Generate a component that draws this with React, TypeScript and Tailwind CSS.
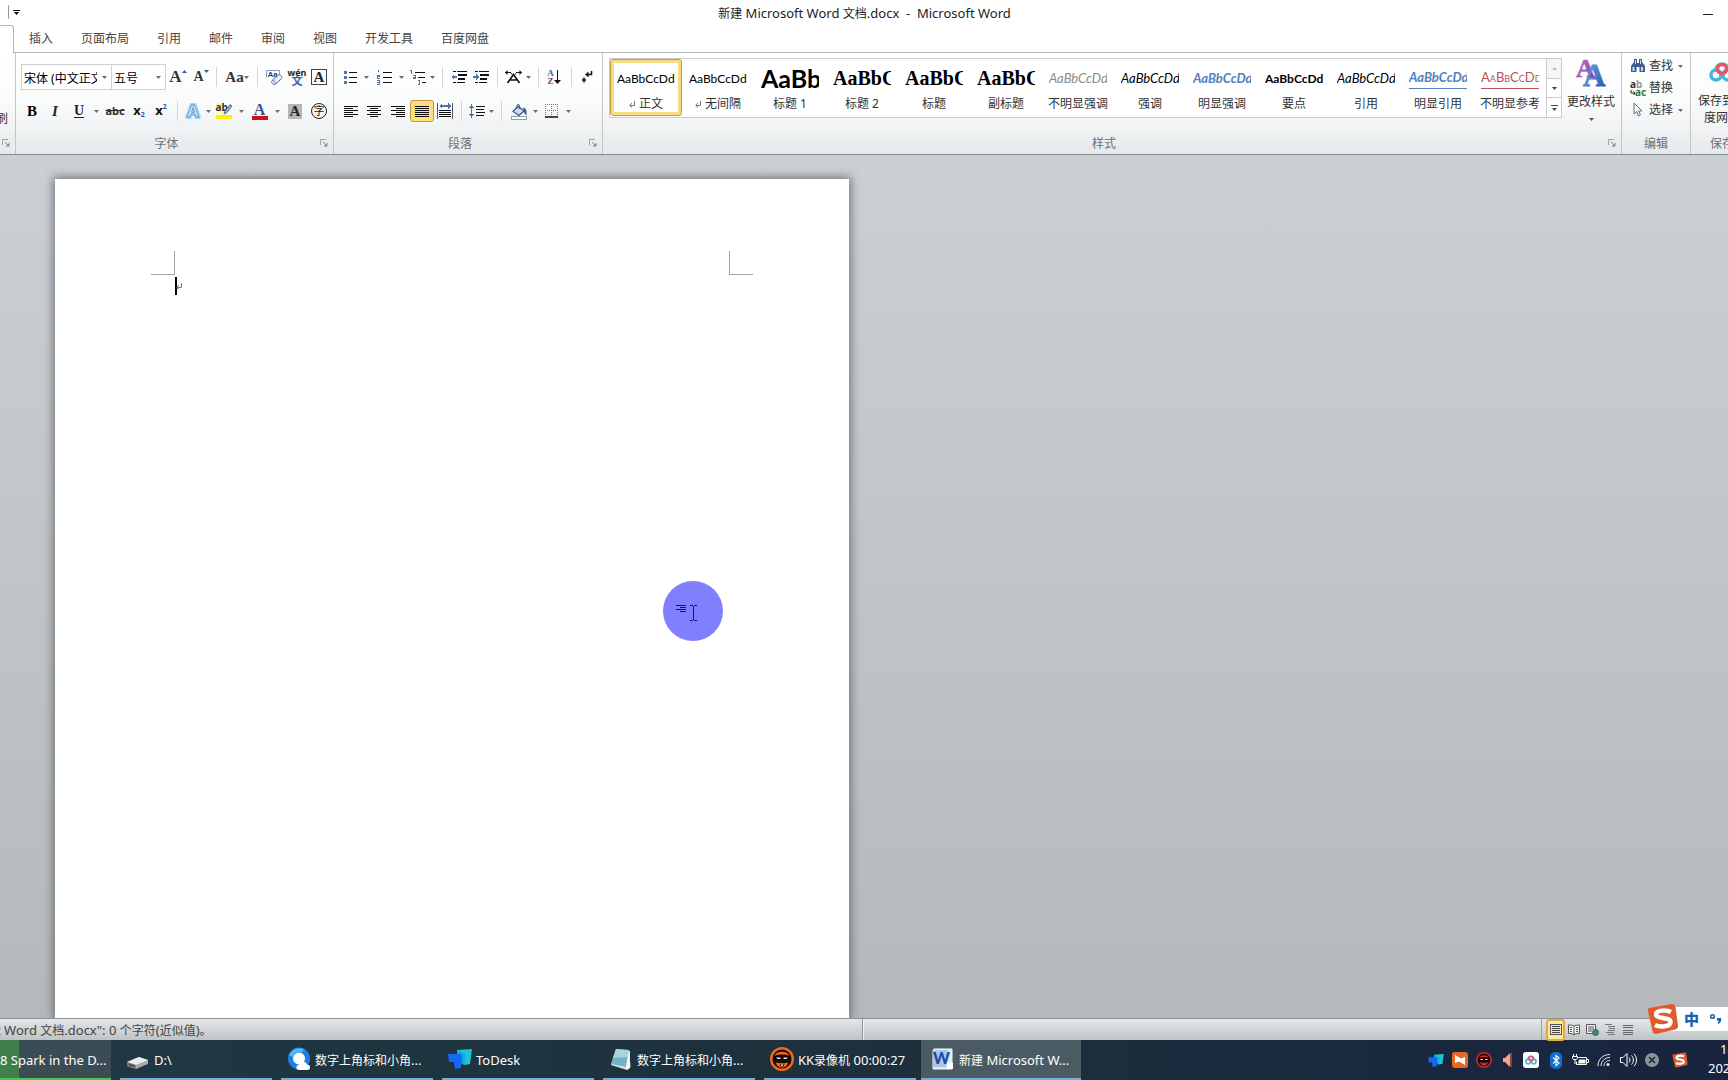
import React from "react";

const UI_FONT = "font-['Noto_Sans','Noto_Sans_CJK_SC',sans-serif]";

/* Latin runs are set one pixel larger than the Chinese characters beside them. */
function Mixed({ text }: { text: string }) {
  const runs = text.match(/[\x20-\x7e]+|[^\x20-\x7e]+/g) ?? [];
  return (
    <>
      {runs.map((run, i) => (
        <span key={i} className={/^[\x20-\x7e]/.test(run) ? "text-[13px]" : "text-xs"}>
          {run}
        </span>
      ))}
    </>
  );
}

function Tool({ w, label, className = "", children }: { w: string; label: string; className?: string; children: React.ReactNode }) {
  return (
    <button type="button" aria-label={label} title={label} className={`flex h-[22px] shrink-0 items-center justify-center ${w} ${className}`}>
      {children}
    </button>
  );
}

function Tri({ className = "text-[#6b6f74]" }: { className?: string }) {
  return (
    <svg width="5" height="3" viewBox="0 0 5 3" className={className} aria-hidden="true">
      <path d="M0 0h5L2.5 3z" fill="currentColor" />
    </svg>
  );
}

function Caret({ w, label }: { w: string; label: string }) {
  return (
    <Tool w={w} label={label}>
      <Tri />
    </Tool>
  );
}

function Sep({ w }: { w: string }) {
  return (
    <span className={`flex h-5 shrink-0 justify-center ${w}`}>
      <span className="w-px bg-[#d3d6d9]" />
    </span>
  );
}

/* Horizontal strokes given as [x, y, width]. */
function Lines({ rows, w = 16, h = 16, color = "#111", children }: { rows: number[][]; w?: number; h?: number; color?: string; children?: React.ReactNode }) {
  return (
    <svg width={w} height={h} viewBox={`0 0 ${w} ${h}`} shapeRendering="crispEdges" aria-hidden="true">
      {rows.map(([x, y, len], i) => (
        <rect key={i} x={x} y={y} width={len} height="1" fill={color} />
      ))}
      {children}
    </svg>
  );
}

function Launcher({ label }: { label: string }) {
  return (
    <button type="button" aria-label={label} className="absolute right-[5px] bottom-[7px]">
      <svg width="8" height="8" viewBox="0 0 8 8" fill="none" aria-hidden="true">
        <path d="M.5 6V.5H6" stroke="#9aa0a6" />
        <path d="M3 3l3 3" stroke="#7b8187" />
        <path d="M7.500 3.500v4h-4z" fill="#8a9096" />
      </svg>
    </button>
  );
}

function Group({ name, launcher = true, className = "", children }: { name: string; launcher?: boolean; className?: string; children: React.ReactNode }) {
  return (
    <section aria-label={name} className={`relative flex flex-col border-r border-[#c3c7ca] ${className}`}>
      <div className="flex-1">{children}</div>
      <h2 className={`h-[22px] text-center text-xs leading-6 whitespace-nowrap text-[#6a7178] ${launcher ? "pr-4" : ""}`}>{name}</h2>
      {launcher && <Launcher label={`${name}设置`} />}
    </section>
  );
}

function Picker({ label, value, w }: { label: string; value: string; w: string }) {
  return (
    <label className={`relative block h-[26px] border border-[#cfd2d5] bg-white ${w}`}>
      <select aria-label={label} className="h-full w-full appearance-none bg-transparent pr-3.5 pl-0.5 text-xs text-black outline-none">
        <option>{value}</option>
      </select>
      <span className="pointer-events-none absolute top-[11px] right-1">
        <Tri />
      </span>
    </label>
  );
}

const SERIF = "font-['Liberation_Serif',serif]";

function FontGroup() {
  return (
    <Group name="字体" className="w-[318px]">
      <div className="mt-[11px] flex h-[26px] items-center pl-[5px]">
        <Picker label="字体" value="宋体 (中文正文)" w="w-[91px]" />
        <Picker label="字号" value="五号" w="w-[55px] -ml-px" />
        <Tool w="w-6" label="增大字体" className={`${SERIF} text-[17px] font-bold text-[#333]`}>
          A
          <svg width="5" height="3" viewBox="0 0 5 3" className="-mt-3" aria-hidden="true"><path d="M0 3h5L2.500 0z" fill="#3b5b85" /></svg>
        </Tool>
        <Tool w="w-[22px]" label="缩小字体" className={`${SERIF} text-sm font-bold text-[#333]`}>
          A
          <Tri className="-mt-3 text-[#3b5b85]" />
        </Tool>
        <Sep w="w-[9px]" />
        <Tool w="w-8" label="更改大小写" className={`${SERIF} text-[15px] font-bold text-[#333]`}>
          Aa
          <Tri />
        </Tool>
        <Sep w="w-[9px]" />
        <Tool w="w-6" label="清除格式">
          <svg width="17" height="17" viewBox="0 0 17 17" aria-hidden="true">
            <path d="M.5 8.500V1.500h13V6" fill="#fff" stroke="#7f9bc0" />
            <text x="1.500" y="8" fontSize="8" fontWeight="700" fontFamily="Liberation Sans" fill="#1f3d70">Aa</text>
            <path d="M6 11.500l6.500-5.500c1-.8 2.500.2 3 1.200.5 1 .5 2-.2 2.700l-5.500 5c-1 .8-2.600.6-3.500-.4-.8-1-.9-2.300-.3-3z" fill="#e8eef7" stroke="#56729e" />
            <path d="M6.500 11.500c1.500 0 3 1.200 3.200 3.200" fill="none" stroke="#56729e" />
          </svg>
        </Tool>
        <Tool w="w-[22px]" label="拼音指南">
          <span className="flex flex-col items-center">
            <span className="text-[9px] leading-[7px] font-bold text-[#222]">wén</span>
            <span className="text-[11px] leading-[10px] font-bold text-[#3f62a0]">文</span>
          </span>
        </Tool>
        <Tool w="w-[22px]" label="字符边框">
          <span className={`${SERIF} flex size-4 items-center justify-center border border-[#444] text-[15px] font-bold text-[#222]`}>A</span>
        </Tool>
      </div>
      <div className="mt-[9px] flex h-6 items-center pl-[5px]">
        <Tool w="w-[22px]" label="加粗" className={`${SERIF} text-[15px] font-bold text-black`}>B</Tool>
        <Tool w="w-6" label="倾斜" className={`${SERIF} text-[15px] font-bold italic text-[#222]`}>I</Tool>
        <Tool w="w-6" label="下划线" className={`${SERIF} text-sm font-bold text-[#222] underline underline-offset-2`}>U</Tool>
        <Caret w="w-2.5" label="下划线选项" />
        <Tool w="w-7" label="删除线" className="text-[11px] font-bold text-[#333] line-through">abc</Tool>
        <Tool w="w-5" label="下标" className="text-[13px] font-bold text-[#111]">
          x<span className="mt-2 text-[7px] text-[#2f5597]">2</span>
        </Tool>
        <Tool w="w-6" label="上标" className="text-[13px] font-bold text-[#111]">
          x<span className="-mt-2 text-[7px] text-[#2f5597]">2</span>
        </Tool>
        <Sep w="w-2" />
        <Tool w="w-6" label="文本效果">
          <svg width="18" height="18" viewBox="0 0 18 18" aria-hidden="true">
            <text x="9" y="15" textAnchor="middle" fontSize="17" fontWeight="700" fontFamily="Liberation Sans" fill="#fff" stroke="#a5d3f0" strokeWidth="4" strokeLinejoin="round">A</text>
            <text x="9" y="15" textAnchor="middle" fontSize="17" fontWeight="700" fontFamily="Liberation Sans" fill="#fff" stroke="#5c9fd0" strokeWidth="1">A</text>
          </svg>
        </Tool>
        <Caret w="w-1.5" label="文本效果选项" />
        <Tool w="w-[26px]" label="突出显示">
          <svg width="18" height="18" viewBox="0 0 18 18" aria-hidden="true">
            <rect x="1" y="13" width="16" height="4" fill="#fdf000" />
            <rect x="1" y="1" width="8" height="10" fill="#fdf6a0" />
            <text x="0.500" y="9" fontSize="10" fontWeight="700" fontFamily="Noto Sans" fill="#333">ab</text>
            <path d="M9 12l1-3 5-6.500 2 1.500-5 6.500z" fill="#9fb1c6" stroke="#44546a" strokeWidth=".8" />
          </svg>
        </Tool>
        <Caret w="w-2" label="突出显示选项" />
        <Tool w="w-[29px]" label="字体颜色">
          <span className={`${SERIF} flex w-4 flex-col items-center text-[16px] leading-[13px] font-bold text-[#3c5587]`}>
            A<span className="h-1 w-4 bg-[#cc1418]" />
          </span>
        </Tool>
        <Caret w="w-[7px]" label="字体颜色选项" />
        <Tool w="w-7" label="字符底纹">
          <span className={`${SERIF} flex h-[15px] w-3.5 items-center justify-center bg-[#b5b8ba] text-[15px] font-bold text-[#222]`}>A</span>
        </Tool>
        <Tool w="w-5" label="带圈字符">
          <span className="flex size-4 shrink-0 items-center justify-center rounded-full border border-[#222] text-[11px] text-[#111]">字</span>
        </Tool>
      </div>
    </Group>
  );
}

function ParagraphGroup() {
  return (
    <Group name="段落" className="w-[269px]">
      <div className="mt-[11px] flex h-[26px] items-center pl-[7px]">
        <Tool w="w-5" label="项目符号">
          <Lines rows={[[5, 2, 8], [5, 7, 8], [5, 12, 8]]} w={14} h={14}>
            <path d="M0 1h3v3H0zM0 6h3v3H0zM0 11h3v3H0z" fill="#5474a5" />
          </Lines>
        </Tool>
        <Caret w="w-2.5" label="项目符号选项" />
        <Tool w="w-[26px]" label="编号">
          <Lines rows={[[6, 2, 9], [6, 7, 9], [6, 12, 9]]} w={15} h={15}>
            <path d="M1 0h1v4M0 0h1M0 5h3v2H1v1h2v1H0V7M0 10h3v5H0v-1h2v-1H0v-1h2v-1H0z" fill="#5474a5" />
          </Lines>
        </Tool>
        <Caret w="w-2" label="编号选项" />
        <Tool w="w-6" label="多级列表">
          <Lines rows={[[6, 2, 10], [9, 7, 7], [13, 12, 4]]} w={17} h={15}>
            <path d="M1 0h2v4H2V1H1zM4 5h3v4H4V7h2V6H4zM9 10h2v5H9v-1h1v-3H9z" fill="#5474a5" />
          </Lines>
        </Tool>
        <Caret w="w-1.5" label="多级列表选项" />
        <Sep w="w-3.5" />
        <Tool w="w-5" label="减少缩进量">
          <Lines rows={[[2, 1, 14], [7, 4, 9], [7, 5, 9], [7, 8, 7], [7, 9, 7], [2, 12, 12]]} w={16} h={15}>
            <path d="M5 0h1v15H5z" fill="#fff" />
            <path d="M0 7l3-3v2h3v2H3v2z" fill="#5474a5" />
          </Lines>
        </Tool>
        <Tool w="w-6" label="增加缩进量">
          <Lines rows={[[2, 1, 14], [7, 4, 9], [7, 5, 9], [7, 8, 7], [7, 9, 7], [2, 12, 12]]} w={16} h={15}>
            <path d="M5 0h1v15H5z" fill="#fff" />
            <path d="M6 7L3 4v2H0v2h3v2z" fill="#5474a5" />
          </Lines>
        </Tool>
        <Sep w="w-2" />
        <Tool w="w-6" label="中文版式">
          <svg width="17" height="14" viewBox="0 0 17 14" fill="none" stroke="#111" aria-hidden="true">
            <path d="M2.500 13l6-8.500 6 8.500M5.500 10h6" strokeWidth="1.600" />
            <path d="M0 2.500h6M11 2.500h6" />
            <path d="M2.500 0L0 2.500 2.500 5zM14.500 0L17 2.500 14.500 5z" fill="#111" stroke="none" />
            <path d="M5.500 2.500l1.500 2M11.500 2.500l-1.500 2" />
          </svg>
        </Tool>
        <Caret w="w-1.5" label="中文版式选项" />
        <Sep w="w-3.5" />
        <Tool w="w-[18px]" label="排序">
          <span className={`${SERIF} flex flex-col text-[9px] leading-[8px] font-bold`}>
            <span className="text-[#3f62a0]">A</span>
            <span className="text-[#8b3a3a]">Z</span>
          </span>
          <svg width="7" height="16" viewBox="0 0 7 16" aria-hidden="true">
            <path d="M3 1h1v10h3l-3.500 4L0 11h3z" fill="#111" />
          </svg>
        </Tool>
        <Sep w="w-4" />
        <Tool w="w-4" label="显示编辑标记">
          <svg width="12" height="14" viewBox="0 0 12 14" aria-hidden="true">
            <path d="M10.500 1v3.500H6" fill="none" stroke="#111" strokeWidth="1.500" />
            <path d="M7.500 1.500v6L4 4.500z" fill="#111" />
            <path d="M1 10h4M3 7.500v5" fill="none" stroke="#111" strokeWidth="1.500" />
          </svg>
        </Tool>
      </div>
      <div className="mt-[9px] flex h-6 items-center pl-[7px]">
        <Tool w="w-5" label="左对齐">
          <Lines rows={[[0, 0, 14], [0, 2, 9], [0, 4, 14], [0, 6, 9], [0, 8, 14], [0, 10, 9]]} w={14} h={11} />
        </Tool>
        <Tool w="w-[26px]" label="居中">
          <Lines rows={[[0, 0, 14], [3, 2, 8], [0, 4, 14], [3, 6, 8], [0, 8, 14], [3, 10, 8]]} w={14} h={11} />
        </Tool>
        <Tool w="w-[22px]" label="右对齐">
          <Lines rows={[[0, 0, 14], [5, 2, 9], [0, 4, 14], [5, 6, 9], [0, 8, 14], [5, 10, 9]]} w={14} h={11} />
        </Tool>
        <Tool w="w-6" label="两端对齐" className="ml-px rounded-[3px] border border-[#c29a3a] bg-gradient-to-b from-[#fbd98a] to-[#ffe36e]">
          <Lines rows={[[0, 0, 14], [0, 2, 14], [0, 4, 14], [0, 6, 14], [0, 8, 14], [0, 10, 14]]} w={14} h={11} />
        </Tool>
        <Tool w="w-[22px]" label="分散对齐">
          <Lines rows={[[2, 7, 12], [2, 9, 12], [2, 11, 12], [2, 13, 12]]} w={16} h={16}>
            <path d="M0 0h1v16H0zM15 0h1v16h-1z" fill="#555" />
            <path d="M2 3l3-3v2h6V0l3 3-3 3V4H5v2z" fill="#5474a5" />
          </Lines>
        </Tool>
        <Sep w="w-2.5" />
        <Tool w="w-[22px]" label="行距">
          <Lines rows={[[7, 3, 9], [7, 6, 8], [7, 9, 9], [7, 12, 8]]} w={16} h={16}>
            <path d="M2 5H0l2.500-4L5 5H3v6h2l-2.500 4L0 11h2z" fill="#5474a5" />
          </Lines>
        </Tool>
        <Caret w="w-1.5" label="行距选项" />
        <Sep w="w-3.5" />
        <Tool w="w-[22px]" label="底纹">
          <svg width="17" height="17" viewBox="0 0 17 17" aria-hidden="true">
            <path d="M7 3l6 5-5 4.500-6-4z" fill="#cfdcec" stroke="#3a5787" strokeWidth="1.200" />
            <path d="M6 6V2.500C6 1 8.500 1 8.500 2.500V6" fill="none" stroke="#3a5787" />
            <path d="M12 4.500c3 .5 4 3 3.500 8-1-1-2.500-2.500-2.500-4.500z" fill="#31568c" />
            <rect x=".5" y="13.500" width="15" height="3" fill="#fff" stroke="#8fa0b5" />
          </svg>
        </Tool>
        <Caret w="w-2.5" label="底纹选项" />
        <Tool w="w-6" label="框线">
          <svg width="14" height="14" viewBox="0 0 14 14" fill="none" aria-hidden="true">
            <path d="M.5 0v13M6.500 0v13M12.500 0v13M0 .5h13M0 6.500h13" stroke="#777" strokeDasharray="1 1" />
            <path d="M0 13h13" stroke="#111" strokeWidth="1.500" />
          </svg>
        </Tool>
        <Caret w="w-2" label="框线选项" />
      </div>
    </Group>
  );
}

const BODY = "font-['Lato',sans-serif] text-xs";
const SLANTED = "font-['Lato',sans-serif] text-[13px] italic";
const HEAD = "font-['Liberation_Serif',serif] text-xl font-bold text-black";

const styleItems: { name: string; look: string; mark?: boolean; selected?: boolean }[] = [
  { name: "正文", look: `${BODY} text-black`, mark: true, selected: true },
  { name: "无间隔", look: `${BODY} text-black`, mark: true },
  { name: "标题 1", look: "font-['Lato',sans-serif] text-[25px] font-bold text-black" },
  { name: "标题 2", look: HEAD },
  { name: "标题", look: HEAD },
  { name: "副标题", look: HEAD },
  { name: "不明显强调", look: `${SLANTED} text-[#8a8a8a]` },
  { name: "强调", look: `${SLANTED} text-black` },
  { name: "明显强调", look: `${SLANTED} font-bold text-[#4f81bd]` },
  { name: "要点", look: `${BODY} font-bold text-black` },
  { name: "引用", look: `${SLANTED} text-black` },
  { name: "明显引用", look: `${SLANTED} font-bold text-[#4f81bd] border-b border-[#4f81bd]` },
  { name: "不明显参考", look: "font-['Lato',sans-serif] text-[13px] [font-variant:small-caps] text-[#b85552] border-b border-[#b85552]" },
];

function ReturnMark({ className = "" }: { className?: string }) {
  return (
    <svg width="6" height="7" viewBox="0 0 6 7" fill="none" stroke="#777" className={className} aria-hidden="true">
      <path d="M5.500 0v4.500H1M3 2L.8 4.500 3 6.500" />
    </svg>
  );
}

function StylesGroup() {
  return (
    <Group name="样式" className="min-w-0 flex-1">
      <div className="flex justify-between pt-[5px] pr-[5px] pl-1.5">
        <div className="flex h-[60px] min-w-0 flex-1 border border-[#c9cccf] bg-white">
          <div className="flex min-w-0 flex-1 overflow-hidden">
            {styleItems.map((s) => (
              <button
                type="button"
                key={s.name}
                aria-pressed={!!s.selected}
                className={`flex h-[57px] w-[72px] shrink-0 flex-col items-center ${s.selected ? "rounded-[3px] border border-[#bf9b3c] shadow-[inset_0_0_0_3px_#f6db82]" : "border border-transparent"}`}
              >
                <span className="flex h-[29px] w-[58px] items-end overflow-hidden">
                  <span className={`w-full text-left leading-[21px] whitespace-nowrap ${s.look}`}>AaBbCcDd</span>
                </span>
                <span className="mt-1.5 flex items-center gap-1 text-xs leading-[18px] whitespace-nowrap text-[#333]">
                  {s.mark && <ReturnMark />}
                  {s.name}
                </span>
              </button>
            ))}
          </div>
          <div className="flex w-[15px] shrink-0 flex-col divide-y divide-[#c9cccf] border-l border-[#c9cccf]">
            <button type="button" aria-label="上一行" className="flex flex-1 items-center justify-center bg-[#f4f5f5]">
              <svg width="5" height="3" viewBox="0 0 5 3" aria-hidden="true"><path d="M0 3h5L2.500 0z" fill="#b9bdc1" /></svg>
            </button>
            <button type="button" aria-label="下一行" className="flex flex-1 items-center justify-center">
              <Tri className="text-[#444]" />
            </button>
            <button type="button" aria-label="其他" className="flex flex-1 flex-col items-center justify-center gap-0.5">
              <span className="h-px w-[7px] bg-[#444]" />
              <Tri className="text-[#444]" />
            </button>
          </div>
        </div>
        <button type="button" className="ml-1 flex w-[50px] shrink-0 flex-col items-center text-xs whitespace-nowrap text-[#333]">
          <svg width="30" height="30" viewBox="0 0 30 30" aria-hidden="true">
            <defs>
              <linearGradient id="violet" x1="0" y1="0" x2="1" y2="1"><stop offset="0" stopColor="#c878d8" /><stop offset="1" stopColor="#7d359c" /></linearGradient>
              <linearGradient id="azure" x1="0" y1="0" x2="1" y2="1"><stop offset="0" stopColor="#7da9e8" /><stop offset="1" stopColor="#2450a8" /></linearGradient>
            </defs>
            <text x="0" y="19" fontSize="26" fontWeight="700" fontFamily="Liberation Serif" fill="url(#violet)" stroke="url(#violet)" strokeWidth=".6">A</text>
            <text x="7" y="28" fontSize="31" fontWeight="700" fontFamily="Liberation Serif" fill="url(#azure)" stroke="url(#azure)" strokeWidth=".8">A</text>
          </svg>
          <span className="mt-[5px] leading-[18px]">更改样式</span>
          <Tri className="mt-[7px] text-[#555]" />
        </button>
      </div>
    </Group>
  );
}

function EditGroup() {
  return (
    <Group name="编辑" launcher={false} className="w-[69px]">
      <div className="flex flex-col pt-0.5 pl-2 text-xs text-[#333]">
        <button type="button" className="flex h-[22px] items-center gap-[3px]">
          <svg width="16" height="14" viewBox="0 0 16 14" aria-hidden="true">
            <path d="M4 0h3v4h2V0h3v3l3 4v6H9.500V8h-3v5H1V7l3-4z" fill="#3f5f92" />
            <path d="M2.500 8h2v4h-2zM11 8h2v4h-2zM5 1h1v4H5zM10 1h1v4h-1z" fill="#cfdcee" />
          </svg>
          查找
          <span className="ml-0.5"><Tri /></span>
        </button>
        <button type="button" className="flex h-[22px] items-center gap-[3px]">
          <span className="relative h-4 w-4 text-left text-[10px] leading-[8px] font-bold">
            <span className="block">a<span className="text-[#999]">b</span></span>
            <span className="block pl-[5px] text-[#2f7a3c]">ac</span>
            <svg width="6" height="6" viewBox="0 0 6 6" className="absolute bottom-0 left-0" fill="none" stroke="#222" aria-hidden="true"><path d="M1 0v3h4M3.500 1.500L5 3 3.500 5" /></svg>
          </span>
          替换
        </button>
        <button type="button" className="flex h-[22px] items-center gap-[3px]">
          <svg width="16" height="16" viewBox="0 0 16 16" aria-hidden="true">
            <path d="M4 1v11l2.700-2.500L8.500 14l2-1-2-4H12z" fill="#fff" stroke="#5b6f8f" strokeLinejoin="round" />
          </svg>
          选择
          <span className="ml-0.5"><Tri /></span>
        </button>
      </div>
    </Group>
  );
}

function CloudRings({ size }: { size: number }) {
  return (
    <svg width={size} height={size} viewBox="0 0 26 26" fill="none" strokeWidth="3.500" className="shrink-0" aria-hidden="true">
      <circle cx="7" cy="16" r="5" stroke="#43b7d9" />
      <circle cx="19" cy="16" r="5" stroke="#43b7d9" />
      <path d="M7 11c0-8 12-8 12 0" stroke="#43b7d9" />
      <circle cx="13" cy="10" r="4.500" stroke="#e4586c" />
    </svg>
  );
}

function Ribbon() {
  return (
    <div className="flex h-[102px] overflow-hidden border-b border-[#868b90] bg-gradient-to-b from-white via-[#fafbfb] to-[#e6e9eb]">
      <section aria-label="剪贴板" className="relative flex w-4 shrink-0 justify-end overflow-hidden border-r border-[#c3c7ca]">
        <span className="mt-[58px] mr-[7px] text-xs whitespace-nowrap text-[#333]">格式刷</span>
        <Launcher label="剪贴板设置" />
      </section>
      <FontGroup />
      <ParagraphGroup />
      <StylesGroup />
      <EditGroup />
      <section aria-label="保存" className="flex w-[37px] shrink-0 flex-col overflow-hidden pl-[7px] text-xs whitespace-nowrap text-[#333]">
        <button type="button" className="flex w-12 flex-1 flex-col items-center pt-1.5">
          <CloudRings size={26} />
          <span className="mt-[7px] leading-[17px]">保存到百</span>
          <span className="leading-[17px]">度网盘</span>
        </button>
        <h2 className="h-[22px] w-12 text-center leading-6 text-[#6a7178]">保存</h2>
      </section>
    </div>
  );
}

function Corner({ className }: { className: string }) {
  return <span className={`block size-6 border-b border-[#a5a5a5] ${className}`} />;
}

function Workspace() {
  return (
    <main className="flex min-h-0 flex-1 overflow-hidden bg-gradient-to-b from-[#cbd0d4] to-[#b5b9bb] pt-6 pl-[55px]">
      <article className="relative w-[794px] shrink-0 bg-white px-24 pt-18 shadow-[0_0_9px_2px_rgba(70,75,80,0.65)]">
        <div className="flex justify-between">
          <Corner className="border-r" />
          <Corner className="border-l" />
        </div>
        <p className="mt-0.5 ml-6 flex h-[18px] items-center">
          <span className="h-full w-0.5 bg-black" />
          <ReturnMark className="-ml-px" />
        </p>
        <div className="absolute top-[402px] left-[608px] flex size-[60px] items-center justify-center rounded-full bg-[#8080fe]">
          <svg width="60" height="60" viewBox="0 0 60 60" shapeRendering="crispEdges" aria-hidden="true">
            <path d="M13 24h10v1H13zM17 26h6v1h-6zM13 28h10v1H13zM17 30h6v1h-6z" fill="#10107a" />
            <path d="M27 24h3v1h-3zM31 24h3v1h-3zM30 25h1v14h-1zM27 39h3v1h-3zM31 39h3v1h-3z" fill="#10107a" />
          </svg>
        </div>
      </article>
    </main>
  );
}

function SogouMark({ size }: { size: number }) {
  return (
    <svg width={size} height={size} viewBox="0 0 32 32" className="shrink-0" aria-hidden="true">
      <path d="M2 5L25 1c2 0 3 1 3.500 3L31 23c0 2-1 3-3 3.500L9 31c-2 0-3-1-3.500-3L1 8c0-2 0-2.500 1-3z" fill="#e2592b" />
      <path d="M24 9C19 6.500 9 7 9 11.500c0 5 14.500 2 14.500 7.500 0 5-10.500 5.500-15.500 3" fill="none" stroke="#fff" strokeWidth="4.500" />
    </svg>
  );
}

function StatusBar() {
  return (
    <footer className="relative flex h-[22px] shrink-0 items-center border-t border-[#8d9296] bg-gradient-to-b from-[#e4e8ea] to-[#bec3c5] text-[#444]">
      <p className="w-[862px] shrink-0 pr-2 leading-[18px] whitespace-nowrap">
        <span className="-ml-1"><Mixed text={'t Word 文档.docx": 0 个字符(近似值)。'} /></span>
      </p>
      <span className="h-full w-px bg-[#8f9498]" />
      <span className="h-full w-px bg-[#eef0f1]" />
      <div className="mr-[91px] ml-auto flex h-full items-center border-l border-[#9a9fa3] pl-1">
        <Tool w="w-[19px]" label="页面视图" className="h-[19px] rounded-[3px] border-2 border-[#d9ae44] bg-[#fdeaa0]">
          <Lines rows={[[2, 2, 8], [2, 4, 8], [2, 6, 8], [2, 8, 8]]} w={12} h={11} color="#444">
            <path d="M0 0h12v11H0zM1 1v9h10V1z" fill="#555" fillRule="evenodd" />
          </Lines>
        </Tool>
        <Tool w="w-[18px]" label="阅读版式视图">
          <svg width="12" height="12" viewBox="0 0 12 12" fill="none" stroke="#555" aria-hidden="true">
            <path d="M6 2.500C5 1 2.500 1 .5 1v8.500c2 0 4.500 0 5.500 1.500 1-1.500 3.500-1.500 5.500-1.500V1C9.500 1 7 1 6 2.500zM6 2.500V11M2 3.500h2M2 5.500h2M2 7.500h2M8 3.500h2M8 5.500h2M8 7.500h2" fill="#f5f5f5" />
          </svg>
        </Tool>
        <Tool w="w-[18px]" label="网页版式视图">
          <svg width="13" height="12" viewBox="0 0 13 12" aria-hidden="true">
            <path d="M.5.500h9v9h-9zM2 3h6M2 5h6M2 7h4" fill="#f2f2f2" stroke="#555" />
            <circle cx="9.500" cy="8.500" r="3" fill="#3f8f63" stroke="#2e5e7a" />
          </svg>
        </Tool>
        <Tool w="w-[18px]" label="大纲视图">
          <Lines rows={[[0, 0, 7], [3, 2, 7], [4, 4, 6], [3, 6, 7], [1, 8, 8], [3, 10, 7]]} w={10} h={11} color="#777" />
        </Tool>
        <Tool w="w-[18px]" label="草稿">
          <Lines rows={[[0, 0, 10], [0, 2, 10], [0, 5, 10], [0, 7, 10], [0, 9, 10]]} w={10} h={10} color="#666" />
        </Tool>
      </div>
      <div className="absolute right-0 bottom-1.5 flex h-[30px] items-center">
        <span className="absolute right-0 h-6 w-[62px] bg-white" />
        <span className="relative flex items-center">
          <SogouMark size={32} />
          <span className="ml-[5px] text-[15px] leading-5 font-black text-[#1a62ad]">中</span>
          <svg width="12" height="12" viewBox="0 0 12 12" className="ml-[11px]" aria-hidden="true">
            <circle cx="2.500" cy="3.500" r="1.800" fill="none" stroke="#1a62ad" strokeWidth="1.600" />
            <path d="M7 5h4c.8 2.500-.2 5-2.800 6l-.7-1.500c1-.5 1.500-1 1.500-1.700H7z" fill="#1a62ad" />
          </svg>
          <span className="w-1.5" />
        </span>
      </div>
    </footer>
  );
}

function MaskedFace({ size, tone }: { size: number; tone: string }) {
  return (
    <svg width={size} height={size} viewBox="0 0 24 24" aria-hidden="true">
      <circle cx="12" cy="12" r="10.800" fill="#1b0b08" stroke={tone} strokeWidth="2.400" />
      <path d="M4.500 8.500C7 3.500 17 3.500 19.500 8.500c-4-1.500-11-1.500-15 0z" fill={tone} />
      <path d="M6 15.500c2 1 10 1 12 0-.5 3.500-3 5-6 5s-5.500-1.500-6-5z" fill={tone} />
      <path d="M3.500 9.500c4-1 13-1 17 0 .3 4-5.500 6-7.500 3h-2c-2 3-7.800 1-7.500-3z" fill="#0c0403" />
      <path d="M6 10.500h4.500v1.500H7.500zM18 10.500h-4.500v1.500h3z" fill="#f6e6de" />
      <path d="M9.500 17.500h5l-1 2h-3z" fill="#1b0b08" />
      <path d="M11.200 17.500h1.600v1.500h-1.600z" fill="#fff" />
    </svg>
  );
}

function ToDeskMark({ w, h }: { w: number; h: number }) {
  return (
    <svg width={w} height={h} viewBox="0 0 24 20" aria-hidden="true">
      <path d="M9 1l15-1-2 15-6 1z" fill="#21c5cf" />
      <path d="M9 1l9 5-2 10-7-4z" fill="#12a9dd" />
      <path d="M0 5h13l1 3-1 11-6 1-1-7H1z" fill="#1567f5" />
    </svg>
  );
}

const tasks = [
  {
    title: "D:\\",
    icon: (
      <svg width="22" height="14" viewBox="0 0 22 14" className="mt-2" aria-hidden="true">
        <path d="M0 6L12 1l9 3v4L9 13 0 10z" fill="#a9a9a9" />
        <path d="M0 6L12 1l9 3L9 9z" fill="#ececec" />
        <path d="M0 6l9 3v4l-9-3z" fill="#777" />
        <path d="M2 8.500l5 1.700" stroke="#333" />
      </svg>
    ),
  },
  {
    title: "数字上角标和小角...",
    icon: (
      <svg width="24" height="24" viewBox="0 0 24 24" aria-hidden="true">
        <circle cx="12" cy="11.500" r="8.500" fill="#fff" stroke="#1f7fe0" strokeWidth="5" />
        <path d="M4 9a9 9 0 0 1 12-5" fill="none" stroke="#54b7f2" strokeWidth="4" />
        <path d="M12 23c-3.500 0-3.500-5 0-5 .5-4 7-4.500 8-.5 4 0 4 5.500.5 5.500z" fill="#fff" />
      </svg>
    ),
  },
  { title: "ToDesk", icon: <ToDeskMark w={24} h={20} /> },
  {
    title: "数字上角标和小角...",
    icon: (
      <svg width="22" height="22" viewBox="0 0 22 22" aria-hidden="true">
        <path d="M6 1l14 2v17l-3 2L1 17z" fill="#d9e4e8" />
        <path d="M6 1l13 1-3 17-15-3z" fill="#6fb3c7" />
        <path d="M6 1l13 1-1.500 7L3 10z" fill="#a6d3df" />
        <path d="M19 2l1.500 17L17 22l-1-3z" fill="#f5f5f0" />
      </svg>
    ),
  },
  { title: "KK录像机 00:00:27", icon: <MaskedFace size={24} tone="#ef6a21" /> },
  {
    title: "新建 Microsoft W...",
    active: true,
    icon: (
      <svg width="22" height="22" viewBox="0 0 22 22" aria-hidden="true">
        <path d="M2 1h18v20H1V2z" fill="#dce8f7" stroke="#f4f8fd" />
        <path d="M1 2h15l-2 17H1z" fill="#a8c7ec" />
        <text x="9.500" y="16" textAnchor="middle" fontSize="16" fontWeight="900" fontFamily="Lato" fill="#1c4ba3">W</text>
        <path d="M15 14l6 1v6h-6z" fill="#fff" />
      </svg>
    ),
  },
];

const tray: { label: string; w: string; icon: React.ReactNode }[] = [
  { label: "ToDesk", w: "w-6", icon: <ToDeskMark w={16} h={13} /> },
  {
    label: "录屏",
    w: "w-6",
    icon: (
      <svg width="16" height="16" viewBox="0 0 16 16" aria-hidden="true">
        <rect width="16" height="16" rx="3" fill="#e9671f" />
        <path d="M3 3l6 3.500L13 5v8L7 9.500 3 11z" fill="#fff" />
      </svg>
    ),
  },
  { label: "KK录像机", w: "w-6", icon: <MaskedFace size={16} tone="#d3242b" /> },
  {
    label: "喇叭",
    w: "w-[22px]",
    icon: (
      <svg width="9" height="14" viewBox="0 0 9 14" aria-hidden="true">
        <path d="M0 5h2l5-5v14L2 9H0z" fill="#f2a58c" />
        <path d="M7 0h2v14H7z" fill="#8c3f35" />
      </svg>
    ),
  },
  {
    label: "百度网盘",
    w: "w-[26px]",
    icon: (
      <span className="flex size-4 items-center justify-center rounded-[3px] bg-white">
        <CloudRings size={12} />
      </span>
    ),
  },
  {
    label: "蓝牙",
    w: "w-6",
    icon: (
      <svg width="12" height="17" viewBox="0 0 12 17" aria-hidden="true">
        <rect width="12" height="17" rx="5" fill="#0f6fc6" />
        <path d="M3 5.500l6 5.500-3 2.500v-10L9 6l-6 5.500" fill="none" stroke="#fff" strokeWidth="1.100" />
      </svg>
    ),
  },
  {
    label: "电源",
    w: "w-6",
    icon: (
      <svg width="17" height="13" viewBox="0 0 17 13" fill="none" stroke="#fff" aria-hidden="true">
        <path d="M6.500 3.500h8v7h-10v-3M15 5.500h1.500v3H15" />
        <path d="M7 5.500h6.500v4H6z" fill="#fff" stroke="none" />
        <path d="M1.500 0v2M4.500 0v2M.5 2.500h5v2l-1.500 1H2l-1.500-1zM3 6v4" />
      </svg>
    ),
  },
  {
    label: "无线网络",
    w: "w-6",
    icon: (
      <svg width="14" height="14" viewBox="0 0 14 14" fill="none" stroke="#e8ecef" aria-hidden="true">
        <path d="M1 13C1 6 6 1.500 13 1.500M4 13c0-5 4-8.500 9-8.500M7 13c0-3.500 2.500-5.500 6-5.500" />
        <circle cx="11" cy="11.500" r="1.500" fill="#e8ecef" stroke="none" />
      </svg>
    ),
  },
  {
    label: "音量",
    w: "w-6",
    icon: (
      <svg width="17" height="14" viewBox="0 0 17 14" fill="none" stroke="#fff" aria-hidden="true">
        <path d="M.5 4.500h2.500l4-4v13l-4-4H.5zM9 4.500c1.300 1.500 1.300 3.500 0 5M11.500 2.500c2.500 2.500 2.500 6.500 0 9M14 .8c3.300 3.500 3.300 9 0 12.400" />
      </svg>
    ),
  },
  {
    label: "已停用",
    w: "w-6",
    icon: (
      <svg width="14" height="14" viewBox="0 0 14 14" aria-hidden="true">
        <circle cx="7" cy="7" r="7" fill="#8d949a" />
        <path d="M4 4l6 6M10 4l-6 6" stroke="#1c2532" strokeWidth="1.600" />
      </svg>
    ),
  },
  { label: "搜狗输入法", w: "w-8", icon: <SogouMark size={16} /> },
];

function Taskbar() {
  return (
    <nav aria-label="任务栏" className="flex h-10 shrink-0 overflow-hidden bg-gradient-to-r from-[#1f3942] via-[#1d303b] to-[#192440] text-white">
      <button type="button" className="mr-[5px] w-[111px] shrink-0 border-b-2 border-[#4fc34f] bg-[linear-gradient(to_right,#3f7f4c_19px,#3b4c55_19px)] text-left whitespace-nowrap">
        <Mixed text="8 Spark in the D..." />
      </button>
      <div className="flex gap-px">
        {tasks.map((t, i) => (
          <button type="button" key={i} className={`flex w-40 shrink-0 flex-col text-left ${t.active ? "bg-[#4a5b64]" : "px-1"}`}>
            <span className={`flex min-h-0 flex-1 items-center whitespace-nowrap ${t.active ? "pl-2.5" : "pl-1.5"}`}>
              <span className="mr-1 flex w-6 justify-center">{t.icon}</span>
              <span className="truncate">
                <Mixed text={t.title} />
              </span>
            </span>
            <span className="h-0.5 w-full bg-[#76b0d6]" />
          </button>
        ))}
      </div>
      <div className="ml-auto flex items-center">
        {tray.map((t) => (
          <button type="button" key={t.label} aria-label={t.label} className={`flex h-full items-center justify-center ${t.w}`}>
            {t.icon}
          </button>
        ))}
      </div>
      <time className="ml-2.5 flex w-[22px] shrink-0 flex-col gap-px overflow-hidden pl-0.5 text-[13px] leading-[18px] whitespace-nowrap">
        <span className="pl-3">18:05</span>
        <span>2022/</span>
      </time>
    </nav>
  );
}

export default function App() {
  return (
    <div className={`flex h-screen flex-col overflow-hidden bg-white ${UI_FONT}`}>
      <header className="flex h-[25px] shrink-0 items-start">
        <span className="mt-[5px] ml-2 h-3.5 w-px bg-[#999]" />
        <button type="button" aria-label="自定义快速访问工具栏" className="mt-2.5 ml-1 flex flex-col items-center gap-px">
          <span className="h-px w-[7px] bg-black" />
          <Tri className="text-black" />
        </button>
        <h1 className="flex-1 pl-1.5 text-center leading-6 whitespace-pre text-[#222]">
          <Mixed text="新建 Microsoft Word 文档.docx  -  Microsoft Word" />
        </h1>
        <button type="button" aria-label="最小化" className="mr-[15px] flex h-full w-2.5 items-center pt-1">
          <span className="h-px w-full bg-[#222]" />
        </button>
      </header>
      <div className="flex h-7 shrink-0">
        <span className="w-3.5 rounded-tr-[3px] border-t border-r border-[#b3b7ba]" />
        <nav aria-label="功能区选项卡" className="flex flex-1 items-center gap-7 border-b border-[#b3b7ba] pl-[15px] text-xs text-[#444]">
          {["插入", "页面布局", "引用", "邮件", "审阅", "视图", "开发工具", "百度网盘"].map((t) => (
            <a key={t} href="#" className="whitespace-nowrap">
              {t}
            </a>
          ))}
        </nav>
      </div>
      <Ribbon />
      <Workspace />
      <StatusBar />
      <Taskbar />
    </div>
  );
}
